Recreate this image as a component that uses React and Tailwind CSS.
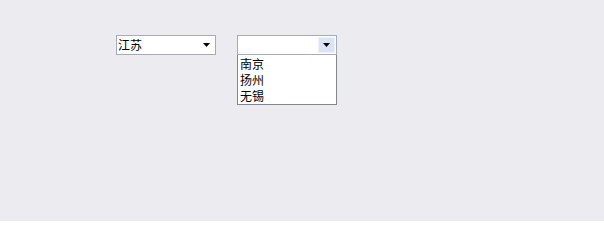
import React from 'react';

const font = {fontFamily: '"Noto Sans CJK SC", "Liberation Sans", sans-serif'};

const Arrow = () => (
    <svg width="7" height="4" viewBox="0 0 7 4" className="block">
        <path d="M0 0h7L3.5 4z" fill="#000"/>
    </svg>
);

const App = () => {
    const cities = ['南京', '扬州', '无锡'];

    return (
        <div className="w-[604px] h-[221px] bg-[#ebebf0] overflow-hidden" style={font}>
            <div className="flex items-start gap-[21px] pl-[116px] pt-[35px]">
                {/* province select */}
                <div className="w-[100px] h-[20px] bg-white border border-[#a5acb5] flex items-center justify-between">
                    <span className="text-[12px] leading-[18px] text-black pl-px">江苏</span>
                    <span className="pr-[5px]"><Arrow/></span>
                </div>

                {/* city select, opened */}
                <div className="w-[100px] flex flex-col">
                    <div className="h-[20px] bg-white border border-[#a5acb5] flex justify-end p-px">
                        <div className="w-[17px] h-full bg-[#dbe3f6] border border-[#edf1fb] flex items-center justify-center">
                            <Arrow/>
                        </div>
                    </div>
                    <ul className="bg-white border border-t-0 border-[#828790] pl-[2px] pt-px">
                        {cities.map(c => (
                            <li key={c} className="text-[12px] leading-[16px] text-black">{c}</li>
                        ))}
                    </ul>
                </div>
            </div>
        </div>
    );
};

export default App;
